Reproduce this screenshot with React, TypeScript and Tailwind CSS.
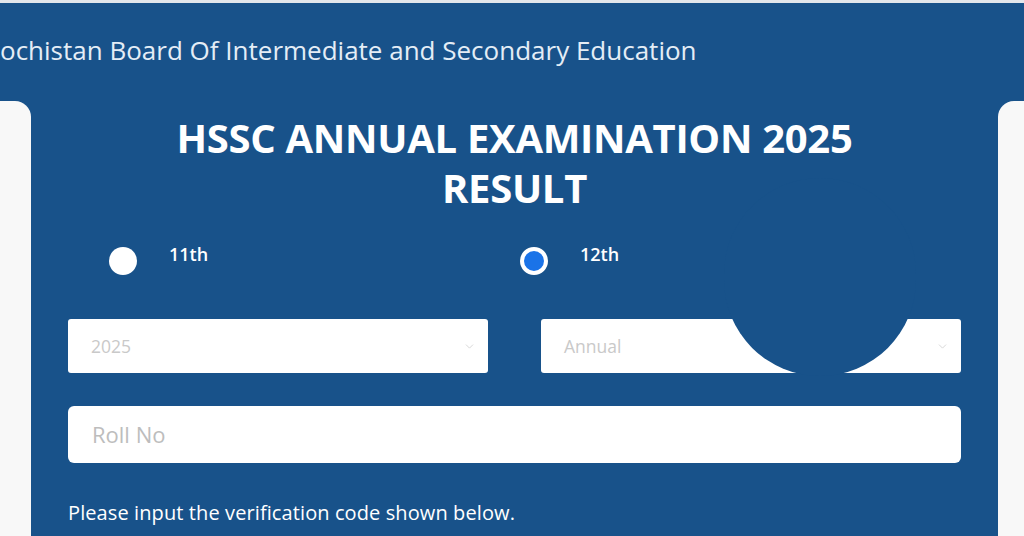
import { ChevronDown } from "lucide-react";

const font = { fontFamily: '"Open Sans", "Noto Sans", sans-serif' };

function Radio({ label, checked }: { label: string; checked?: boolean }) {
  return (
    <label className="flex items-start gap-[32px]">
      <span
        className={
          checked
            ? "mt-[6px] h-[28px] w-[28px] rounded-full border-[4px] border-white bg-[#1a73e8]"
            : "mt-[6px] h-[28px] w-[28px] rounded-full bg-white"
        }
      />
      <span className="text-[18px] font-semibold leading-[26px] text-white">{label}</span>
    </label>
  );
}

function FakeSelect({ value }: { value: string }) {
  return (
    <div className="flex h-[54px] flex-1 items-center justify-between rounded-[3px] bg-white pl-[23px] pr-[12px]">
      <span className="text-[17.5px] text-[#c9c9c9]">{value}</span>
      <ChevronDown className="h-[13px] w-[13px] text-[#cfcfcf]" strokeWidth={1.5} />
    </div>
  );
}

export default function App() {
  return (
    <div className="relative h-[536px] w-[1024px] overflow-hidden bg-[#18528a]" style={font}>
      <div className="h-[3px] bg-[#e3e7ec]" />
      <header className="flex h-[98px] items-center overflow-hidden pb-[4px]">
        <h1 className="whitespace-nowrap text-[26px] font-normal text-[#e4edf6]">
          ochistan Board Of Intermediate and Secondary Education
        </h1>
      </header>

      <div className="flex h-[435px]">
        <div className="w-[31px] rounded-tr-[16px] bg-[#f8f8f8]" />

        <main className="flex-1 pl-[37px] pr-[37px]">
          <div className="pt-[12px] text-center text-[40px] font-bold leading-[50px] tracking-[-0.3px] text-white">
            <div>HSSC ANNUAL EXAMINATION 2025</div>
            <div>RESULT</div>
          </div>

          <div className="mt-[28px] flex pl-[41px]">
            <div className="w-[411px]">
              <Radio label="11th" />
            </div>
            <Radio label="12th" checked />
          </div>

          <div className="mt-[44px] flex gap-[53px]">
            <FakeSelect value="2025" />
            <FakeSelect value="Annual" />
          </div>

          <div className="mt-[33px] flex h-[57px] items-center rounded-[6px] bg-white pl-[24px]">
            <span className="text-[22px] text-[#bdbdbd]">Roll No</span>
          </div>

          <p className="mt-[35px] text-[20px] tracking-[0.1px] text-white">
            Please input the verification code shown below.
          </p>
        </main>

        <div className="w-[26px] rounded-tl-[16px] bg-[#f8f8f8]" />
      </div>

      {/* redaction blot over the right side */}
      <div className="absolute left-[724px] top-[178px] h-[198px] w-[192px] rounded-full bg-[#18528a]" />
    </div>
  );
}
